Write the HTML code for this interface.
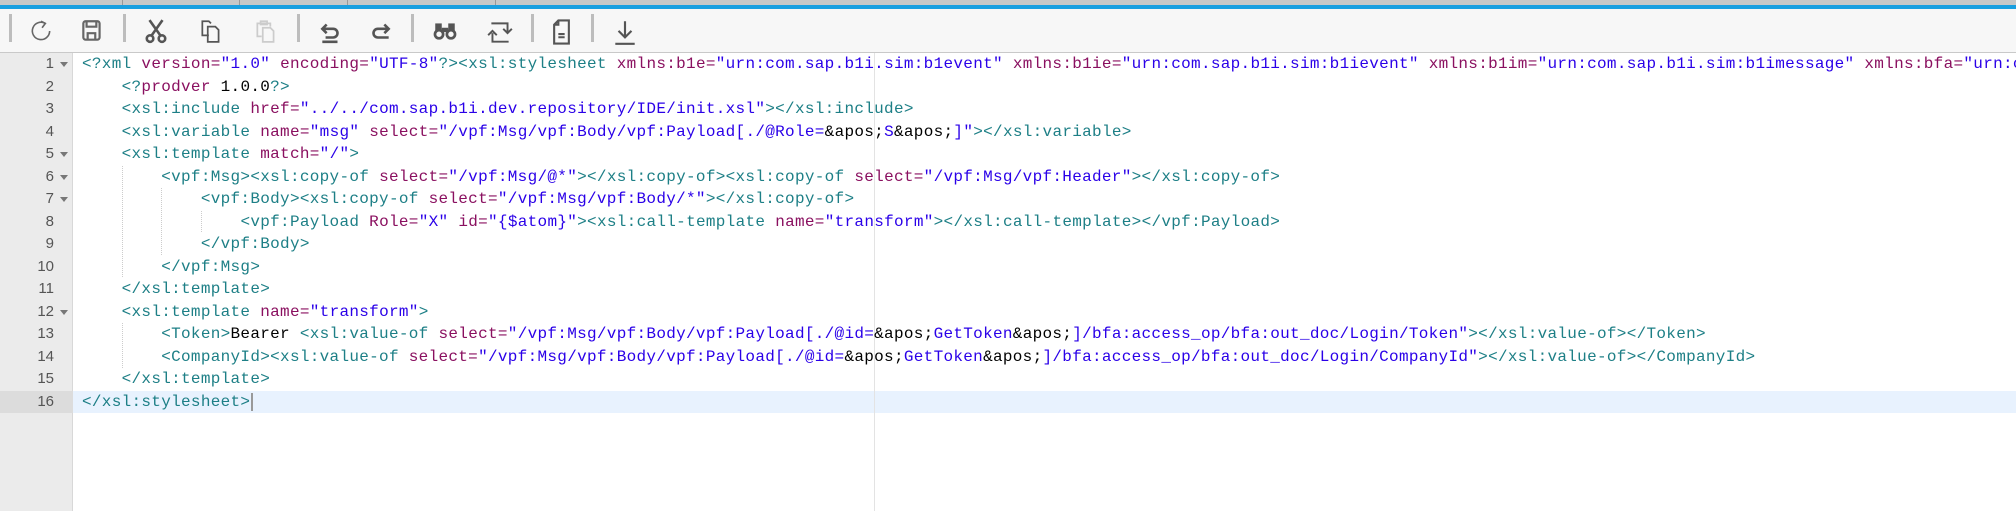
<!DOCTYPE html>
<html><head><meta charset="utf-8"><style>
*{margin:0;padding:0;box-sizing:border-box}
body{width:2016px;height:511px;overflow:hidden;background:#fff;position:relative;font-family:"Liberation Mono",monospace}
.top{position:absolute;left:0;top:0;width:2016px;height:5px;background:#c8c8c8}
.top i{position:absolute;top:0;width:1px;height:5px;background:#999}
.blue{position:absolute;left:0;top:5px;width:2016px;height:4px;background:#1a9fe0}
.tb{position:absolute;left:0;top:9px;width:2016px;height:44px;background:#f7f7f7;border-bottom:1px solid #c9c9c9}
.sep{position:absolute;top:5px;width:3px;height:28px;background:#bdbdbd}
.ic{position:absolute;top:9px}
.gut{position:absolute;left:0;top:53px;width:73px;height:458px;background:#ebebeb;border-right:1px solid #d8d8d8}
.ln{position:absolute;left:0;width:73px;height:22.5px;line-height:22.5px;font-size:15px;color:#555;font-family:"Liberation Sans",sans-serif}
.ln span{position:absolute;right:19px}
.ln b{position:absolute;left:60px;top:9px;width:0;height:0;border-left:4px solid transparent;border-right:4px solid transparent;border-top:5px solid #777}
.hl{position:absolute;left:73px;top:390.5px;width:1943px;height:22.5px;background:#e8f2fe}
.hlg{position:absolute;left:0;top:390.5px;width:73px;height:22.5px;background:#dcdcdc}
.pm{position:absolute;left:874px;top:53px;width:1px;height:458px;background:#e3e3e3}
.code{position:absolute;left:82px;top:53px;width:1934px;overflow:hidden}
.l{height:22.5px;line-height:22.5px;font-size:16px;letter-spacing:.3px;white-space:pre;color:#000}
.t{color:#1d7f86}.a{color:#8a1060}.s{color:#2a00e8}
.guide{position:absolute;width:1px;background-image:linear-gradient(#ccc 50%,transparent 50%);background-size:1px 2px}
.cur{position:absolute;left:251px;top:393px;width:2px;height:18px;background:#999}
</style></head><body>
<div class="top"><i style="left:122px"></i><i style="left:239px"></i><i style="left:347px"></i><i style="left:495px"></i></div>
<div class="blue"></div>
<div class="tb">
<div class="sep" style="left:9px"></div><div class="sep" style="left:123px"></div><div class="sep" style="left:297px"></div><div class="sep" style="left:411px"></div><div class="sep" style="left:531px"></div><div class="sep" style="left:591px"></div>
<svg class="ic" style="left:29px" width="24" height="26" viewBox="0 0 22 24" fill="none" stroke="#666" stroke-width="1.5"><path d="M15 5 A8 8 0 1 0 19 12"/><path d="M11 3 L15 5 L12 9"/></svg>
<svg class="ic" style="left:80px" width="24" height="26" viewBox="0 0 22 24" fill="none" stroke="#666" stroke-width="2"><rect x="3" y="3" width="15" height="17" rx="2"/><path d="M6 3v5h9V3M7 20v-6h7v6"/></svg>
<svg class="ic" style="left:144px" width="24" height="26" viewBox="0 0 22 24" fill="none" stroke="#555" stroke-width="2.4"><path d="M5 2 L15 16 M17 2 L7 16"/><circle cx="5.5" cy="19" r="3"/><circle cx="16.5" cy="19" r="3"/></svg>
<svg class="ic" style="left:199px" width="24" height="26" viewBox="0 0 22 24" fill="none" stroke="#555" stroke-width="1.6"><path d="M9 16H3V3h6l2 2"/><path d="M8 8h7l3 3v11H8z"/></svg>
<svg class="ic" style="left:254px" width="24" height="26" viewBox="0 0 22 24" fill="none" stroke="#ccc" stroke-width="1.6"><path d="M7 17H3V5h12v3"/><rect x="6" y="3" width="6" height="3"/><path d="M8 9h7l3 3v10H8z"/></svg>
<svg class="ic" style="left:319px" width="24" height="26" viewBox="0 0 22 24" fill="none" stroke="#555" stroke-width="2.4"><path d="M7 6L3 10l4 4M3 10h10a4 4 0 0 1 0 8H6M3 22h14"/></svg>
<svg class="ic" style="left:368px" width="24" height="26" viewBox="0 0 22 24" fill="none" stroke="#555" stroke-width="2.4"><path d="M15 6l4 4-4 4M19 10H9a4 4 0 0 0 0 8h10"/></svg>
<svg class="ic" style="left:432px" width="26" height="26" viewBox="0 0 24 24" fill="#555"><circle cx="6.5" cy="15" r="5"/><circle cx="17.5" cy="15" r="5"/><rect x="3" y="5" width="6" height="8"/><rect x="15" y="5" width="6" height="8"/><rect x="9" y="9" width="6" height="4"/><circle cx="6.5" cy="15" r="2.5" fill="#f7f7f7"/><circle cx="17.5" cy="15" r="2.5" fill="#f7f7f7"/></svg>
<svg class="ic" style="left:487px" width="26" height="28" viewBox="0 0 24 26" fill="none" stroke="#555" stroke-width="1.8"><path d="M4 5h15v8M15 10l4 4 4-4M20 22H5v-8M1 16l4-4 4 4"/></svg>
<svg class="ic" style="left:551px" width="21" height="28" viewBox="0 0 20 26" fill="none" stroke="#555" stroke-width="2"><path d="M7 2h10v22H3V6z M7 2v4H3"/><path d="M7 15h6M7 18h6"/></svg>
<svg class="ic" style="left:613px" width="24" height="28" viewBox="0 0 22 26" fill="none" stroke="#555" stroke-width="2"><path d="M11 3v15M5 12l6 6 6-6M2 24h18"/></svg>
</div>
<div class="gut"></div>
<div class="hl"></div><div class="hlg"></div>
<div class="pm"></div>
<div class="guide" style="left:122px;top:166px;height:112px"></div>
<div class="guide" style="left:161px;top:188px;height:67px"></div>
<div class="guide" style="left:201px;top:211px;height:22px"></div>
<div class="guide" style="left:122px;top:323px;height:45px"></div>
<div style="position:absolute;left:0;top:53px">
<div class="ln" style="top:0"><span>1</span><b></b></div>
<div class="ln" style="top:22.5px"><span>2</span></div>
<div class="ln" style="top:45px"><span>3</span></div>
<div class="ln" style="top:67.5px"><span>4</span></div>
<div class="ln" style="top:90px"><span>5</span><b></b></div>
<div class="ln" style="top:112.5px"><span>6</span><b></b></div>
<div class="ln" style="top:135px"><span>7</span><b></b></div>
<div class="ln" style="top:157.5px"><span>8</span></div>
<div class="ln" style="top:180px"><span>9</span></div>
<div class="ln" style="top:202.5px"><span>10</span></div>
<div class="ln" style="top:225px"><span>11</span></div>
<div class="ln" style="top:247.5px"><span>12</span><b></b></div>
<div class="ln" style="top:270px"><span>13</span></div>
<div class="ln" style="top:292.5px"><span>14</span></div>
<div class="ln" style="top:315px"><span>15</span></div>
<div class="ln" style="top:337.5px"><span>16</span></div>
</div>
<div class="code">
<div class="l"><span class="t">&lt;?xml</span> <span class="a">version=</span><span class="s">"1.0"</span> <span class="a">encoding=</span><span class="s">"UTF-8"</span><span class="t">?&gt;&lt;xsl:stylesheet</span> <span class="a">xmlns:b1e=</span><span class="s">"urn:com.sap.b1i.sim:b1event"</span> <span class="a">xmlns:b1ie=</span><span class="s">"urn:com.sap.b1i.sim:b1ievent"</span> <span class="a">xmlns:b1im=</span><span class="s">"urn:com.sap.b1i.sim:b1imessage"</span> <span class="a">xmlns:bfa=</span><span class="s">"urn:com.sap.b1i.bizprocessor:bizatoms"</span></div>
<div class="l">    <span class="t">&lt;?</span><span class="a">prodver</span> 1.0.0<span class="t">?&gt;</span></div>
<div class="l">    <span class="t">&lt;xsl:include</span> <span class="a">href=</span><span class="s">"../../com.sap.b1i.dev.repository/IDE/init.xsl"</span><span class="t">&gt;&lt;/xsl:include&gt;</span></div>
<div class="l">    <span class="t">&lt;xsl:variable</span> <span class="a">name=</span><span class="s">"msg"</span> <span class="a">select=</span><span class="s">"/vpf:Msg/vpf:Body/vpf:Payload[./@Role=</span>&amp;apos;<span class="s">S</span>&amp;apos;<span class="s">]"</span><span class="t">&gt;&lt;/xsl:variable&gt;</span></div>
<div class="l">    <span class="t">&lt;xsl:template</span> <span class="a">match=</span><span class="s">"/"</span><span class="t">&gt;</span></div>
<div class="l">        <span class="t">&lt;vpf:Msg&gt;&lt;xsl:copy-of</span> <span class="a">select=</span><span class="s">"/vpf:Msg/@*"</span><span class="t">&gt;&lt;/xsl:copy-of&gt;&lt;xsl:copy-of</span> <span class="a">select=</span><span class="s">"/vpf:Msg/vpf:Header"</span><span class="t">&gt;&lt;/xsl:copy-of&gt;</span></div>
<div class="l">            <span class="t">&lt;vpf:Body&gt;&lt;xsl:copy-of</span> <span class="a">select=</span><span class="s">"/vpf:Msg/vpf:Body/*"</span><span class="t">&gt;&lt;/xsl:copy-of&gt;</span></div>
<div class="l">                <span class="t">&lt;vpf:Payload</span> <span class="a">Role=</span><span class="s">"X"</span> <span class="a">id=</span><span class="s">"{$atom}"</span><span class="t">&gt;&lt;xsl:call-template</span> <span class="a">name=</span><span class="s">"transform"</span><span class="t">&gt;&lt;/xsl:call-template&gt;&lt;/vpf:Payload&gt;</span></div>
<div class="l">            <span class="t">&lt;/vpf:Body&gt;</span></div>
<div class="l">        <span class="t">&lt;/vpf:Msg&gt;</span></div>
<div class="l">    <span class="t">&lt;/xsl:template&gt;</span></div>
<div class="l">    <span class="t">&lt;xsl:template</span> <span class="a">name=</span><span class="s">"transform"</span><span class="t">&gt;</span></div>
<div class="l">        <span class="t">&lt;Token&gt;</span>Bearer <span class="t">&lt;xsl:value-of</span> <span class="a">select=</span><span class="s">"/vpf:Msg/vpf:Body/vpf:Payload[./@id=</span>&amp;apos;<span class="s">GetToken</span>&amp;apos;<span class="s">]/bfa:access_op/bfa:out_doc/Login/Token"</span><span class="t">&gt;&lt;/xsl:value-of&gt;&lt;/Token&gt;</span></div>
<div class="l">        <span class="t">&lt;CompanyId&gt;&lt;xsl:value-of</span> <span class="a">select=</span><span class="s">"/vpf:Msg/vpf:Body/vpf:Payload[./@id=</span>&amp;apos;<span class="s">GetToken</span>&amp;apos;<span class="s">]/bfa:access_op/bfa:out_doc/Login/CompanyId"</span><span class="t">&gt;&lt;/xsl:value-of&gt;&lt;/CompanyId&gt;</span></div>
<div class="l">    <span class="t">&lt;/xsl:template&gt;</span></div>
<div class="l"><span class="t">&lt;/xsl:stylesheet&gt;</span></div>
</div>
<div class="cur"></div>
</body></html>
